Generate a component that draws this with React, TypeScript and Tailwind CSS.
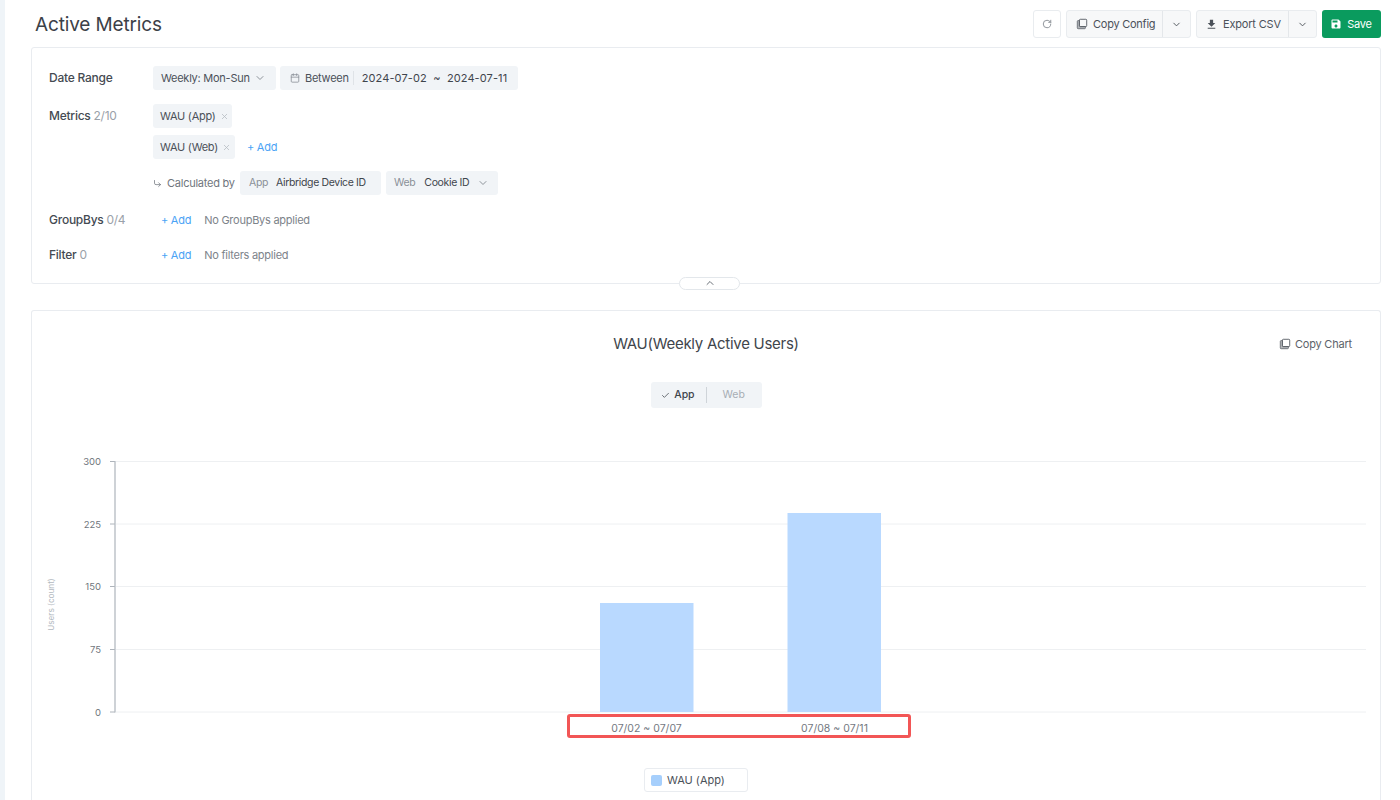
import React from "react";
import { RotateCw, ChevronDown, ChevronUp, Calendar, CornerDownRight, X, Check } from "lucide-react";
import { MdFileDownload, MdSave } from "react-icons/md";

function CopyIcon({ className }: { className?: string }) {
  return (
    <svg viewBox="0 0 14 14" className={className} fill="none" stroke="currentColor">
      <rect x="4" y="1.5" width="8.5" height="8.5" rx="1" strokeWidth="1.1" />
      <path d="M4 3H2.5a1 1 0 0 0-1 1v7.5a1 1 0 0 0 1 1H10a1 1 0 0 0 1-1V10H5a1 1 0 0 1-1-1Z" fill="currentColor" fillOpacity="0.45" strokeWidth="0.9" />
    </svg>
  );
}

function Chip({ className = "", children }: { className?: string; children: React.ReactNode }) {
  return <div className={"flex h-6 items-center whitespace-nowrap rounded-[3px] bg-[#f1f4f7] text-[#4b5159] " + className}>{children}</div>;
}

function AddLink() {
  return <span className="whitespace-nowrap pt-px text-[11px] tracking-[-0.25px] text-[#4aa3f5]">+ Add</span>;
}

function Label({ name, count }: { name: string; count?: string }) {
  return (
    <div className="w-[104px] shrink-0 whitespace-nowrap text-[12px] font-medium tracking-[-0.25px] text-[#444a52]">
      {name} <span className="font-normal text-[#9aa1a9]">{count}</span>
    </div>
  );
}

const ticks = [
  { y: 461.5, t: "300" },
  { y: 524, t: "225" },
  { y: 586.5, t: "150" },
  { y: 649.5, t: "75" },
  { y: 712, t: "0" },
];

function Chart() {
  // The svg starts at page x=32, y=440.
  return (
    <svg width="1348" height="320" viewBox="32 440 1348 320" className="block" style={{ fontFamily: "Inter, sans-serif" }}>
      {ticks.map((k) => (
        <g key={k.t}>
          <line x1="116" x2="1366" y1={k.y} y2={k.y} stroke="#eef0f2" strokeWidth="1" />
          <line x1="110" x2="115" y1={k.y} y2={k.y} stroke="#aeb4bb" strokeWidth="1" />
          <text x="101" y={k.y + 3.5} textAnchor="end" fontSize="9.5" fill="#70767d">{k.t}</text>
        </g>
      ))}
      <line x1="115" x2="115" y1="461" y2="712.5" stroke="#b4bac1" strokeWidth="1.3" />
      <text transform="translate(53.5 604.5) rotate(-90)" textAnchor="middle" fontSize="8.2" fill="#b3b9c0">Users (count)</text>
      <rect x="600" y="603" width="93.5" height="109" fill="#b9d9ff" />
      <rect x="787.5" y="513" width="93.5" height="199" fill="#b9d9ff" />
      <text x="646.5" y="732" textAnchor="middle" fontSize="10.5" fill="#74797f">07/02 ~ 07/07</text>
      <text x="834.5" y="732" textAnchor="middle" fontSize="10.5" fill="#74797f">07/08 ~ 07/11</text>
    </svg>
  );
}

export default function App() {
  return (
    <div className="flex h-[800px] w-[1400px] overflow-hidden bg-white" style={{ fontFamily: "Inter, 'Noto Sans', sans-serif" }}>
      <div className="w-[5px] shrink-0 bg-[#eff4f8]" />
      <main className="flex min-w-0 flex-1 flex-col pl-[26px] pr-[19px]">
        <header className="flex h-[47px] shrink-0 items-start justify-between pt-[10px]">
          <h1 className="pl-1 pt-px text-[19px] leading-7 font-normal tracking-[-0.15px] text-[#3c4148]">Active Metrics</h1>
          <div className="flex h-[28px] items-stretch gap-[5px] whitespace-nowrap text-[11px] tracking-[-0.25px] text-[#4b5159]">
            <button className="flex w-[28px] items-center justify-center rounded-[3px] border border-[#e9ecef] bg-white">
              <RotateCw className="h-[10px] w-[10px] text-[#7d838a]" />
            </button>
            <div className="flex w-[125px] rounded-[3px] border border-[#e9ecef] bg-[#f7f8f9]">
              <div className="flex w-[95px] items-center gap-[5px] pl-[9px]"><CopyIcon className="h-3 w-3 text-[#5c6269]" />Copy Config</div>
              <div className="flex flex-1 items-center justify-center border-l border-[#e4e7ea]"><ChevronDown className="h-[11px] w-[11px]" /></div>
            </div>
            <div className="flex w-[121px] rounded-[3px] border border-[#e9ecef] bg-[#f7f8f9]">
              <div className="flex w-[91px] items-center gap-[5px] pl-[8px] tracking-[-0.18px]"><MdFileDownload className="h-[13px] w-[13px] text-[#4b5159]" />Export CSV</div>
              <div className="flex flex-1 items-center justify-center border-l border-[#e4e7ea]"><ChevronDown className="h-[11px] w-[11px]" /></div>
            </div>
            <button className="flex w-[59px] items-center justify-center gap-[5px] rounded-[3px] bg-[#0a9b5e] pr-px text-white">
              <MdSave className="h-3 w-3" />Save
            </button>
          </div>
        </header>

        <section className="relative h-[237px] shrink-0 rounded-[3px] border border-[#e9ecf0] pl-[17px] pt-[18px] text-[11px] tracking-[-0.25px]">
          <div className="flex h-6 items-center">
            <Label name="Date Range" />
            <div className="flex gap-1">
              <Chip className="w-[123px] justify-between pl-[8px] pr-[10px]">
                <span>Weekly: Mon-Sun</span><ChevronDown className="h-3 w-3 text-[#8d939a]" />
              </Chip>
              <Chip className="w-[238px] pl-[10px]">
                <Calendar className="h-[10px] w-[10px] text-[#8d939a]" />
                <span className="ml-[5px] border-r border-[#dfe3e7] pr-[4px] leading-[14px]">Between</span>
                <span className="ml-[8px] whitespace-pre tracking-[0.1px] text-[#3f454c]">2024-07-02  ~  2024-07-11</span>
              </Chip>
            </div>
          </div>
          <div className="mt-[14px] flex items-start">
            <div className="flex h-6 items-center"><Label name="Metrics" count="2/10" /></div>
            <div className="flex flex-col">
              <Chip className="w-[79px] pl-[7px]">WAU (App)<X className="ml-[4px] h-[9px] w-[9px] text-[#b3b9c0]" /></Chip>
              <div className="mt-[7px] flex items-center">
                <Chip className="w-[82px] pl-[7px]">WAU (Web)<X className="ml-[4px] h-[9px] w-[9px] text-[#b3b9c0]" /></Chip>
                <span className="ml-3"><AddLink /></span>
              </div>
              <div className="mt-3 flex items-center">
                <CornerDownRight className="h-[9px] w-[9px] text-[#70767d]" />
                <span className="ml-[5px] w-[73px] whitespace-nowrap text-[#70767d]">Calculated by</span>
                <Chip className="w-[141px] pl-[9px] text-[10.5px] tracking-[-0.35px]"><span className="text-[#8a9097]">App</span><span className="ml-[8px] text-[#3f454c]">Airbridge Device ID</span></Chip>
                <Chip className="ml-[5px] w-[112px] pl-[8px] text-[10.5px] tracking-[-0.35px]">
                  <span className="text-[#8a9097]">Web</span><span className="ml-[9px] text-[#3f454c]">Cookie ID</span>
                  <ChevronDown className="ml-[8px] h-3 w-3 text-[#8d939a]" />
                </Chip>
              </div>
            </div>
          </div>
          <div className="mt-[13px] flex h-[24px] items-center">
            <Label name="GroupBys" count="0/4" />
            <span className="ml-[8px]"><AddLink /></span>
            <span className="ml-[13px] pt-px text-[#7d838a]">No GroupBys applied</span>
          </div>
          <div className="mt-[11px] flex h-[24px] items-center">
            <Label name="Filter" count="0" />
            <span className="ml-[8px]"><AddLink /></span>
            <span className="ml-[13px] pt-px text-[#7d838a]">No filters applied</span>
          </div>
          <button className="absolute -bottom-[7px] left-[647px] flex h-[13px] w-[61px] items-center justify-center rounded-full border border-[#e3e7eb] bg-white pb-[2px]">
            <ChevronUp className="h-3 w-3 text-[#6b7178]" />
          </button>
        </section>

        <section className="relative mt-[26px] flex-1 rounded-t-[3px] border border-b-0 border-[#e9ecf0]">
          <div className="relative flex h-[71px] items-start justify-center pt-[23px]">
            <h2 className="text-[15px] leading-5 font-normal tracking-[-0.27px] text-[#3f454c]">WAU(Weekly Active Users)</h2>
            <div className="absolute right-[28px] top-[25px] flex items-center gap-[4px] text-[11px] tracking-[-0.2px] text-[#5c6269]">
              <CopyIcon className="h-3 w-3 text-[#5c6269]" />Copy Chart
            </div>
          </div>
          <div className="flex justify-center">
            <div className="flex h-[26px] w-[111px] items-center rounded-[3px] bg-[#f1f4f7] text-[10.5px]">
              <div className="flex w-[56px] items-center justify-end gap-[4px] border-r border-[#cfd4d9] pr-[11px] font-medium tracking-[-0.1px] text-[#3f454c]">
                <Check className="h-[9px] w-[9px]" />App
              </div>
              <div className="flex-1 pl-[16px] text-[#a7adb4]">Web</div>
            </div>
          </div>
          <div className="relative mt-[32px]">
            <Chart />
            <div className="absolute left-[535px] top-[274px] h-[24px] w-[344px] rounded-[3px] border-[3px] border-[#f25656]" />
          </div>
          <div className="absolute left-[612px] top-[457px] flex h-[24px] w-[104px] items-center rounded-[3px] border border-[#e9ecf0] bg-white pl-[6px] text-[11px] text-[#4b5159]">
            <span className="mr-[5px] h-[11px] w-[11px] rounded-[2px] bg-[#a6cffc]" />WAU (App)
          </div>
        </section>
      </main>
    </div>
  );
}
